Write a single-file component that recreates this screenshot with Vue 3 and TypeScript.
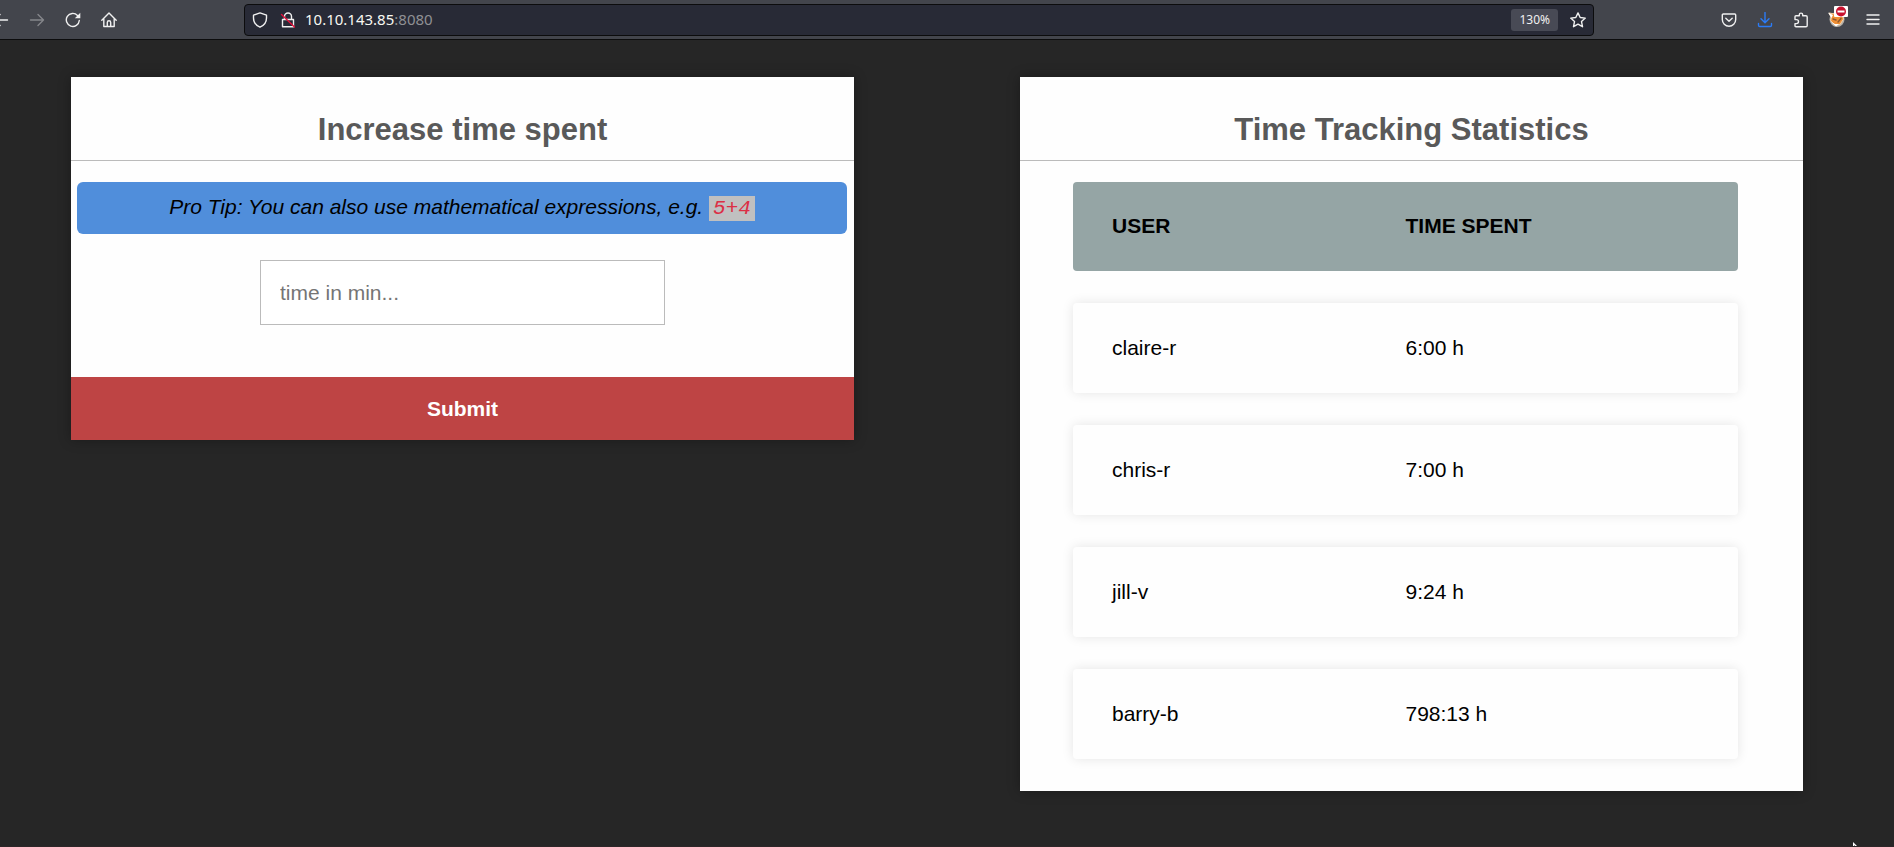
<script setup lang="ts">
import { ref } from 'vue'

interface Entry {
  user: string
  time: string
}

const minutes = ref('')
const entries: Entry[] = [
  { user: 'claire-r', time: '6:00 h' },
  { user: 'chris-r', time: '7:00 h' },
  { user: 'jill-v', time: '9:24 h' },
  { user: 'barry-b', time: '798:13 h' },
]
</script>

<template>
  <div class="window">
    <header class="toolbar">
      <nav class="nav" aria-label="Navigation">
        <button type="button" aria-label="Back">
          <svg viewBox="0 0 16 16"><path d="M14.500 8H1.500M7 2.500L1.500 8L7 13.500" /></svg>
        </button>
        <button type="button" aria-label="Forward" class="dim">
          <svg viewBox="0 0 16 16"><path d="M1.500 8H14.500M9 2.500L14.500 8L9 13.500" /></svg>
        </button>
        <button type="button" aria-label="Reload">
          <svg viewBox="0 0 16 16">
            <path d="M14.300 8.500A6.500 6.500 0 1 1 12.500 3.400" />
            <path class="solid" d="M15.300 .8V6.300H9.800Z" />
          </svg>
        </button>
        <button type="button" aria-label="Home">
          <svg viewBox="0 0 16 16">
            <path d="M.8 8.200L8 1L15.200 8.200M2.800 6.500V14.500H13.200V6.500M6.300 14V10.500Q6.300 8.800 8 8.800T9.700 10.500V14" />
          </svg>
        </button>
      </nav>

      <div class="urlbar">
        <button type="button" aria-label="Tracking protection">
          <svg viewBox="0 0 16 16"><path d="M8 .9L14.500 3.200V6C14.500 10.500 12 13.500 8 15.200C4 13.500 1.500 10.500 1.500 6V3.200Z" /></svg>
        </button>
        <button type="button" aria-label="Connection is not secure">
          <svg viewBox="0 0 16 16">
            <path d="M4.500 7V4.500A3.500 3.500 0 0 1 11.500 4.500V7M2.500 7.500H13.500V14.800H2.500Z" />
            <path class="strike" d="M1.500 2.500L14.500 15" />
          </svg>
        </button>
        <a class="address" href="#">10.10.143.85<span>:8080</span></a>
        <button type="button" class="zoom">130%</button>
        <button type="button" aria-label="Bookmark this page">
          <svg viewBox="0 0 16 16"><path d="M8 .9L10.200 5.500L15.300 6.100L11.500 9.600L12.500 14.700L8 12.200L3.500 14.700L4.500 9.600L.7 6.100L5.800 5.500Z" /></svg>
        </button>
      </div>

      <div class="tools">
        <button type="button" aria-label="Save to Pocket">
          <svg viewBox="0 0 16 16"><path d="M2.300 2H13.700Q14.700 2 14.700 3V7.500A6.700 6.700 0 0 1 1.300 7.500V3Q1.300 2 2.300 2ZM4.800 6.200L8 9.200L11.200 6.200" /></svg>
        </button>
        <button type="button" aria-label="Downloads" class="blue">
          <svg viewBox="0 0 16 16"><path d="M8 .5V10.500M4 6.800L8 10.700L12 6.800M1.500 11.500V13.200Q1.500 14.500 2.800 14.500H13.200Q14.500 14.500 14.500 13.200V11.500" /></svg>
        </button>
        <button type="button" aria-label="Extensions">
          <svg viewBox="0 0 16 16"><path d="M2 5.700V4.700Q2 3.700 3 3.700H6.300V2.800A1.700 1.700 0 0 1 9.700 2.800V3.700H13Q14.200 3.700 14.200 4.900V13.500Q14.200 14.700 13 14.700H3Q2 14.700 2 13.700V11.600H3.500A1.700 1.700 0 0 0 3.500 7.600H2Z" /></svg>
        </button>
        <button type="button" aria-label="Proxy switcher" class="fox">
          <svg viewBox="0 0 20 22">
            <circle class="fox-rim" cx="9" cy="13.500" r="7.500" />
            <path class="fox-fur" d="M3 11L1 7L7 8L14 8L15.500 13L12 18.500L7 19L3 15Z" />
            <path class="fox-ear" d="M0 6.500L5 9L3.500 12ZM3 16L7 18L11 18L8 20.500Z" />
            <path class="fox-line" d="M5 13L8 14M10 16L13 12.500" />
            <rect class="badge" x="6" y="0" width="14" height="11" rx="1" />
            <circle class="stop" cx="13" cy="5.500" r="5" />
            <path class="stop-bar" d="M9.500 5.500H16.500" />
          </svg>
        </button>
        <button type="button" aria-label="Menu">
          <svg viewBox="0 0 16 16"><path d="M2 3H14M2 7.500H14M2 12H14" /></svg>
        </button>
      </div>
    </header>

    <main class="page">
      <form class="card" @submit.prevent>
        <h1>Increase time spent</h1>
        <p class="tip">Pro Tip: You can also use mathematical expressions, e.g. <code>5+4</code></p>
        <input v-model="minutes" type="text" aria-label="Time in minutes" placeholder="time in min..." />
        <button type="submit" class="submit">Submit</button>
      </form>

      <section class="card">
        <h1>Time Tracking Statistics</h1>
        <table>
          <thead>
            <tr>
              <th scope="col">USER</th>
              <th scope="col">TIME SPENT</th>
            </tr>
          </thead>
          <tbody>
            <tr v-for="entry in entries" :key="entry.user">
              <td>{{ entry.user }}</td>
              <td>{{ entry.time }}</td>
            </tr>
          </tbody>
        </table>
      </section>
    </main>

    <svg class="cursor" viewBox="0 0 4 4" aria-hidden="true"><path d="M0 0L4 4H2L1 3V4H0Z" /></svg>
  </div>
</template>

<style>
body {
  margin: 0;
  background: #262626;
}
</style>

<style scoped>
.window {
  position: relative;
  min-height: 100vh;
  box-sizing: border-box;
  border-bottom: 1px solid #2d2628;
  background: #262626;
  font-family: "Liberation Sans", Arial, sans-serif;
  font-size: 21px;
  line-height: 24px;
  color: #000;
}

button {
  border: 0;
  padding: 0;
  background: none;
  font: inherit;
  color: inherit;
}

.toolbar {
  display: flex;
  align-items: center;
  height: 39px;
  border-bottom: 1px solid #0c0c0d;
  background: #43454c;
  color: #f0f0f0;
}

.toolbar button {
  display: flex;
  flex: none;
}

.toolbar svg {
  width: 16px;
  height: 16px;
  fill: none;
  stroke: currentColor;
  stroke-width: 1.4;
  stroke-linejoin: round;
  stroke-linecap: round;
}

.nav {
  display: flex;
  flex: none;
  gap: 20px;
  width: 251px;
  margin-left: -7px;
}

.toolbar .dim {
  color: #85868a;
}

.toolbar .solid {
  fill: currentColor;
  stroke: none;
}

.urlbar {
  display: flex;
  flex: 1;
  align-items: center;
  gap: 12px;
  height: 32px;
  box-sizing: border-box;
  padding: 0 7px;
  border: 1px solid #0c0c0d;
  border-radius: 4px;
  background: #282a36;
}

.toolbar .strike {
  stroke: #e4103c;
}

.address {
  flex: 1;
  margin-left: -3px;
  padding-bottom: 2px;
  font: 15px/20px "Noto Sans", sans-serif;
  color: #f8f8f2;
  text-decoration: none;
}

.address span {
  color: #8f9094;
}

.toolbar .zoom {
  padding: 1px 8px;
  border-radius: 3px;
  background: #484a55;
  font: 12px/20px "Noto Sans", sans-serif;
}

.tools {
  display: flex;
  flex: none;
  align-items: center;
  justify-content: flex-end;
  gap: 20px;
  width: 287px;
  padding-right: 13px;
}

.toolbar .blue {
  color: #2b7bf6;
}

.toolbar .fox svg {
  width: 20px;
  height: 22px;
  margin: -6px -3px 0 -1px;
}

.toolbar .fox-rim {
  fill: #b5b0a8;
  stroke: none;
}

.toolbar .fox-fur {
  fill: #ef8f35;
  stroke: #f3d0a6;
  stroke-width: 1;
}

.toolbar .fox-ear {
  fill: #fff;
  stroke: none;
}

.toolbar .fox-line {
  stroke: #8d5930;
}

.toolbar .badge {
  fill: #fff;
  stroke: none;
}

.toolbar .stop {
  fill: #c8102e;
  stroke: none;
}

.toolbar .stop-bar {
  stroke: #fff;
  stroke-width: 2;
  stroke-linecap: butt;
}

.page {
  display: grid;
  grid-template-columns: 1fr 1fr;
  align-items: start;
  gap: 166px;
  padding: 37px 91px 54px 71px;
}

.card {
  display: flex;
  flex-direction: column;
  background: #fefefe;
  box-shadow: 0 0 12px rgba(0, 0, 0, 0.3);
}

h1 {
  margin: 0 0 21px;
  padding: 35px 0 12px;
  border-bottom: 1px solid #bbb;
  font-size: 31px;
  line-height: 36px;
  text-align: center;
  color: #595959;
}

.tip {
  margin: 0 7px 26px 6px;
  padding: 13px 0 15px;
  border-radius: 6px;
  background: #508edb;
  font-style: italic;
  text-align: center;
}

code {
  padding: 1px 4px;
  background: #c0c0c0;
  font-family: "Liberation Mono", monospace;
  font-size: 21px;
  line-height: 20px;
  color: #dc2f45;
}

input {
  align-self: center;
  width: 405px;
  height: 65px;
  box-sizing: border-box;
  margin-bottom: 52px;
  padding: 0 19px;
  border: 1px solid #bbb;
  background: #fff;
  font: inherit;
}

input::placeholder {
  color: #757575;
  opacity: 1;
}

.submit {
  height: 63px;
  background: #be4444;
  font-weight: bold;
  color: #fff;
}

table {
  display: block;
  margin: 0 65px 32px 53px;
}

thead,
tbody {
  display: grid;
  gap: 32px;
}

thead {
  margin-bottom: 32px;
}

tr {
  display: flex;
  padding: 33px 39px;
  border-radius: 4px;
  box-shadow: 0 0 12px rgba(0, 0, 0, 0.1);
}

thead tr {
  padding: 32px 39px 33px;
  background: #95a5a5;
  box-shadow: none;
}

th,
td {
  flex: 1;
  padding: 0;
  text-align: left;
}

.cursor {
  position: absolute;
  right: 37px;
  bottom: 0;
  width: 4px;
  height: 4px;
  fill: #fff;
}
</style>
